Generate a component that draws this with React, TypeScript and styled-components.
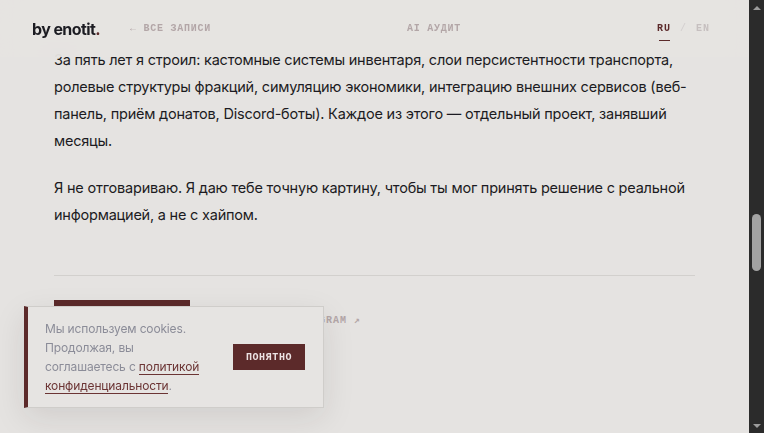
import React from "react";
import styled, { createGlobalStyle } from "styled-components";

const GlobalStyle = createGlobalStyle`
  html, body {
    margin: 0;
    height: 100%;
    overflow: hidden;
    background: #e5e3e1;
  }
  body {
    color: #1e1e24;
    font-family: Inter, "Noto Sans", sans-serif;
    -webkit-font-smoothing: antialiased;
  }
  * { box-sizing: border-box; }
`;

const mono = `"Liberation Mono", "DejaVu Sans Mono", monospace`;

const Window = styled.div`
  display: flex;
  height: 100vh;
`;

const Viewport = styled.div`
  position: relative;
  flex: 1;
  min-width: 0;
  overflow: hidden;
  background: #e5e3e1;
`;

const Header = styled.header`
  position: absolute;
  top: 0;
  left: 0;
  right: 0;
  z-index: 10;
  height: 57px;
  padding: 0 39px 0 32px;
  display: flex;
  align-items: center;
  justify-content: space-between;
  background: rgba(229, 227, 225, 0.9);
  backdrop-filter: blur(10px);
`;

const HeaderGroup = styled.div`
  display: flex;
  align-items: center;
  gap: 30px;
`;

const Logo = styled.a`
  font-family: Inter, sans-serif;
  font-weight: 700;
  font-size: 16px;
  letter-spacing: -0.6px;
  color: #1c1c22;
  text-decoration: none;
  span { color: #5c2a2a; }
`;

const NavLink = styled.a`
  font-family: ${mono};
  font-size: 10px;
  font-weight: 700;
  letter-spacing: 0.75px;
  text-transform: uppercase;
  color: #b3a6a7;
  text-decoration: none;
`;

const LangSwitch = styled.div`
  display: flex;
  align-items: center;
  gap: 9px;
  font-family: ${mono};
  font-size: 10px;
  font-weight: 700;
  letter-spacing: 1px;
`;

const Lang = styled.span<{ $active?: boolean }>`
  position: relative;
  color: ${(p) => (p.$active ? "#5c2a2a" : "#c6bfbf")};
  &::after {
    content: "";
    display: ${(p) => (p.$active ? "block" : "none")};
    position: absolute;
    left: 2px;
    right: 1px;
    bottom: -7px;
    height: 1.5px;
    background: #5c2a2a;
  }
`;

const Slash = styled.span`
  color: #d2cdcd;
  font-weight: 400;
`;

const Article = styled.article`
  max-width: 641px;
  margin: 0 auto;
  padding-top: 46px;
`;

const Paragraph = styled.p`
  margin: 0 0 20px;
  font-size: 14.5px;
  letter-spacing: -0.21px;
  line-height: 27px;
  color: #1c1b22;
`;

const CtaSection = styled.div`
  margin-top: 47px;
  border-top: 1px solid #d2d0cd;
  padding-top: 24px;
  display: flex;
  align-items: center;
  gap: 24px;
`;

const PrimaryButton = styled.a`
  display: flex;
  align-items: center;
  justify-content: center;
  width: 136px;
  height: 40px;
  background: #5c2a2a;
  color: #eee4e4;
  font-family: ${mono};
  font-weight: 700;
  font-size: 10px;
  letter-spacing: 1.2px;
  text-decoration: none;
`;

const TextLink = styled.a`
  font-family: ${mono};
  font-size: 10px;
  font-weight: 700;
  letter-spacing: 1px;
  color: #b3a6a7;
  text-decoration: none;
`;

const Scrollbar = styled.div`
  flex: none;
  width: 15px;
  display: flex;
  flex-direction: column;
  background: #2b2b2b;
`;

const ArrowButton = styled.div<{ $dir: "up" | "down" }>`
  flex: none;
  height: 15px;
  display: flex;
  align-items: center;
  justify-content: center;
  &::before {
    content: "";
    width: 0;
    height: 0;
    border-left: 4px solid transparent;
    border-right: 4px solid transparent;
    ${(p) =>
      p.$dir === "up"
        ? "border-bottom: 4px solid #9c9c9c;"
        : "border-top: 4px solid #9c9c9c;"}
  }
`;

const Track = styled.div`
  flex: 1;
  display: flex;
  flex-direction: column;
  align-items: center;
`;

const Thumb = styled.div`
  width: 9px;
  border-radius: 5px;
  background: #a3a3a3;
`;

const CookieBanner = styled.div`
  position: fixed;
  left: 24px;
  bottom: 25px;
  z-index: 20;
  width: 300px;
  display: flex;
  align-items: center;
  gap: 24px;
  padding: 12px 18px 12px 17px;
  background: #e6e4e2;
  border: 1px solid #cfcdca;
  border-left: 4px solid #5c2a2a;
  box-shadow: 0 10px 30px rgba(40, 30, 30, 0.1);
`;

const CookieText = styled.p`
  flex: 1;
  margin: 0;
  font-size: 12px;
  letter-spacing: -0.15px;
  line-height: 19px;
  color: #8b8c98;
  a {
    color: #6b3434;
    text-decoration: none;
    border-bottom: 1px solid #6b3434;
  }
`;

const AcceptButton = styled.button`
  flex: none;
  width: 72px;
  height: 26px;
  border: 0;
  padding: 0;
  background: #5c2a2a;
  color: #ece2e2;
  font-family: ${mono};
  font-weight: 700;
  font-size: 10px;
  letter-spacing: 0.6px;
  cursor: pointer;
`;

const scroll = { track: 403, docHeight: 3061, top: 1511, view: 433 };

export default function App() {
  const thumbHeight = Math.round((scroll.view / scroll.docHeight) * scroll.track);
  const thumbOffset = Math.round((scroll.top / scroll.docHeight) * scroll.track);

  return (
    <>
      <GlobalStyle />
      <Window>
        <Viewport>
          <Header>
            <HeaderGroup>
              <Logo href="#">
                by enotit<span>.</span>
              </Logo>
              <NavLink href="#">← все записи</NavLink>
            </HeaderGroup>
            <NavLink href="#">AI аудит</NavLink>
            <LangSwitch>
              <Lang $active>RU</Lang>
              <Slash>/</Slash>
              <Lang>EN</Lang>
            </LangSwitch>
          </Header>
          <Article>
            <Paragraph>
              За пять лет я строил: кастомные системы инвентаря, слои персистентности транспорта,
              ролевые структуры фракций, симуляцию экономики, интеграцию внешних сервисов (веб-панель,
              приём донатов, Discord-боты). Каждое из этого — отдельный проект, занявший месяцы.
            </Paragraph>
            <Paragraph>
              Я не отговариваю. Я даю тебе точную картину, чтобы ты мог принять решение с реальной
              информацией, а не с хайпом.
            </Paragraph>
            <CtaSection>
              <PrimaryButton href="#">ОБСУДИТЬ ПРОЕКТ</PrimaryButton>
              <TextLink href="#">НАПИСАТЬ В TELEGRAM ↗</TextLink>
            </CtaSection>
          </Article>
        </Viewport>
        <Scrollbar>
          <ArrowButton $dir="up" />
          <Track>
            <Thumb style={{ height: thumbHeight, marginTop: thumbOffset }} />
          </Track>
          <ArrowButton $dir="down" />
        </Scrollbar>
      </Window>
      <CookieBanner>
        <CookieText>
          Мы используем cookies. Продолжая, вы соглашаетесь с <a href="#">политикой конфиденциальности</a>.
        </CookieText>
        <AcceptButton>ПОНЯТНО</AcceptButton>
      </CookieBanner>
    </>
  );
}
